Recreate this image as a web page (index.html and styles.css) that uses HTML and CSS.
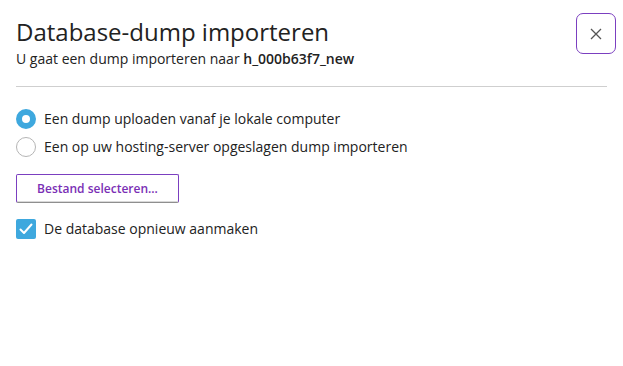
FILE: index.html
```html
<!DOCTYPE html>
<html lang="nl">
<head>
<meta charset="utf-8">
<title>Database-dump importeren</title>
<link rel="stylesheet" href="styles.css">
</head>
<body>
<div class="dialog">
  <div class="header">
    <div class="heading">
      <h1 class="title">Database-dump importeren</h1>
      <p class="subtitle">U gaat een dump importeren naar <b>h_000b63f7_new</b></p>
    </div>
    <button class="close" aria-label="Sluiten">
      <svg width="12" height="12" viewBox="0 0 12 12"><path d="M1 1L11 11M11 1L1 11" stroke="#555" stroke-width="1.3" fill="none"/></svg>
    </button>
  </div>
  <hr class="divider">
  <div class="options">
    <label class="option"><span class="radio checked"></span>Een dump uploaden vanaf je lokale computer</label>
    <label class="option"><span class="radio"></span>Een op uw hosting-server opgeslagen dump importeren</label>
  </div>
  <button class="select-btn">Bestand selecteren...</button>
  <label class="option check-row"><span class="checkbox">
    <svg width="16" height="16" viewBox="0 0 16 16"><path d="M2.5 8.5L6 12L13.5 3.5" stroke="#fff" stroke-width="2" fill="none" stroke-linecap="round" stroke-linejoin="round"/></svg>
  </span>De database opnieuw aanmaken</label>
</div>
</body>
</html>
```
FILE: styles.css
```css
* { box-sizing: border-box; }
body {
  margin: 0;
  background: #fff;
  font-family: "Open Sans", "Noto Sans", sans-serif;
  color: #222;
}
.dialog {
  padding: 13px 7px 0 16px;
}
.header {
  display: flex;
  justify-content: space-between;
  align-items: flex-start;
}
.title {
  margin: 3px 0 0;
  font-size: 24px;
  font-weight: 400;
  line-height: 32px;
  color: #222;
}
.subtitle {
  margin: 0;
  font-size: 14px;
  line-height: 22px;
  color: #222;
}
.subtitle b { font-weight: 600; }
.close {
  width: 40px;
  height: 41px;
  border: 1px solid #7b3fc0;
  border-radius: 7px;
  background: #fff;
  display: flex;
  align-items: center;
  justify-content: center;
  padding: 0;
}
.divider {
  margin: 16px 9px 0 0;
  border: 0;
  border-top: 1px solid #cfcfcf;
  height: 0;
}
.options {
  margin-top: 22px;
  display: flex;
  flex-direction: column;
  gap: 8px;
}
.option {
  display: flex;
  align-items: center;
  gap: 8px;
  font-size: 14px;
  line-height: 20px;
  color: #222;
}
.radio {
  width: 20px;
  height: 20px;
  border-radius: 50%;
  border: 1px solid #b5b5b5;
  background: #fff;
  flex: none;
}
.radio.checked {
  border: 6px solid #3ea8de;
}
.select-btn {
  margin-top: 17px;
  width: 163px;
  height: 29px;
  border: 1px solid #7b3fc0;
  border-bottom-color: #8f8f8f;
  border-radius: 2px;
  background: #fff;
  color: #7a2fb5;
  font-family: "Open Sans", "Noto Sans", sans-serif;
  font-size: 12px;
  font-weight: 600;
  padding: 0;
  box-shadow: inset 0 -1px 0 #d9d9d9;
}
.check-row {
  margin-top: 16px;
}
.checkbox {
  width: 20px;
  height: 20px;
  border-radius: 2px;
  background: #3ea8de;
  display: flex;
  align-items: center;
  justify-content: center;
  flex: none;
}
```
